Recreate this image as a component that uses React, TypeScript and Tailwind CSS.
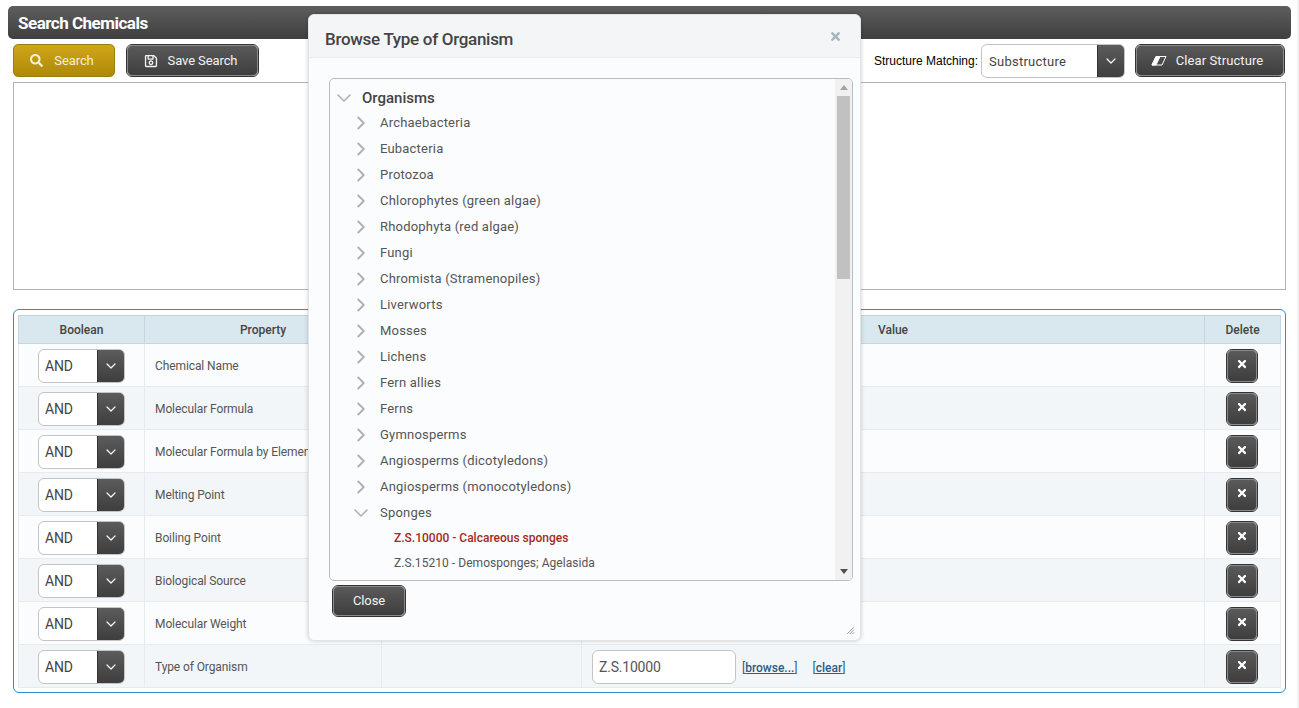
import { ChevronDown, ChevronRight } from "lucide-react";
import type { ReactNode } from "react";
import { FaRegSave, FaSearch, FaTimes } from "react-icons/fa";

const ROWS = [
  "Chemical Name",
  "Molecular Formula",
  "Molecular Formula by Element",
  "Melting Point",
  "Boiling Point",
  "Biological Source",
  "Molecular Weight",
  "Type of Organism",
];

const TREE = [
  "Archaebacteria",
  "Eubacteria",
  "Protozoa",
  "Chlorophytes (green algae)",
  "Rhodophyta (red algae)",
  "Fungi",
  "Chromista (Stramenopiles)",
  "Liverworts",
  "Mosses",
  "Lichens",
  "Fern allies",
  "Ferns",
  "Gymnosperms",
  "Angiosperms (dicotyledons)",
  "Angiosperms (monocotyledons)",
];

const darkBtn =
  "flex items-center justify-center rounded-[5px] border border-[#8a8a8a] bg-gradient-to-b from-[#5a5a5a] to-[#3e3e3e] text-[13px] tracking-[-0.1px] text-[#f2f2f2] outline outline-1 outline-[#333]";

function Button({ icon, label, className }: { icon: ReactNode; label: string; className: string }) {
  return (
    <button className={[darkBtn, "mt-px h-[31px]", className].join(" ")}>
      {icon}
      <span>{label}</span>
    </button>
  );
}

function Select({ value, className, textClass }: { value: string; className: string; textClass: string }) {
  return (
    <div className={["flex h-[34px] overflow-hidden rounded-[6px] border border-[#c4c4c4] bg-white", className].join(" ")}>
      <span className={["flex flex-1 items-center text-[#444]", textClass].join(" ")}>{value}</span>
      <span className="-my-px -mr-px flex w-[28px] items-center justify-center rounded-r-[6px] border border-[#333] bg-gradient-to-b from-[#5c5c5c] to-[#3e3e3e] text-white">
        <ChevronDown size={16} strokeWidth={1.8} />
      </span>
    </div>
  );
}

function TreeRow({ label }: { label: string }) {
  return (
    <div className="flex h-[26px] items-center text-[13px] tracking-[0.2px] text-[#555]">
      <ChevronRight size={22} strokeWidth={2} className="ml-[20px] mr-[8px] text-[#aab2b7]" />
      {label}
    </div>
  );
}

function Modal() {
  return (
    <div className="absolute left-[308px] top-[14px] flex h-[627px] w-[553px] flex-col rounded-[6px] border border-[#e2e4e6] bg-[#fafcfe] shadow-[0_0_4px_rgba(0,0,0,0.2)]">
      <div className="flex h-[43px] items-center justify-between rounded-t-[6px] border-b border-[#e8edf1] bg-[#f3f5f7] pl-[16px] pr-[18px]">
        <h3 className="pt-[7px] text-[17px] font-medium tracking-[-0.3px] text-[#444]">Browse Type of Organism</h3>
        <FaTimes size={13} className="text-[#a9b4bb]" />
      </div>
      <div className="mx-[20px] mt-[20px] flex h-[503px] w-[524px] overflow-hidden rounded-[5px] border border-[#bcbcbc]">
        <div className="h-full flex-1 overflow-hidden">
          <div className="flex h-[31px] items-center pt-[7px] text-[15px] font-medium text-[#444]">
            <ChevronDown size={24} strokeWidth={1.6} className="ml-[2px] mr-[6px] text-[#aab2b7]" />
            Organisms
          </div>
          {TREE.map((t) => (
            <TreeRow key={t} label={t} />
          ))}
          <div className="flex h-[26px] items-center text-[13px] tracking-[0.2px] text-[#555]">
            <ChevronDown size={24} strokeWidth={1.6} className="ml-[19px] mr-[7px] text-[#aab2b7]" />
            Sponges
          </div>
          <div className="flex h-[23px] items-center pl-[64px] text-[12px] font-medium text-[#a52a1c]">
            Z.S.10000 - Calcareous sponges
          </div>
          <div className="flex h-[28px] items-center pl-[64px] text-[12px] tracking-[0.05px] text-[#555]">
            Z.S.15210 - Demosponges; Agelasida
          </div>
        </div>
        <div className="flex h-full w-[17px] flex-col items-center bg-[#f1f1f1]">
          <div className="mt-[6px] h-0 w-0 border-x-[4px] border-b-[5px] border-x-transparent border-b-[#a3a3a3]" />
          <div className="mt-[6px] h-[183px] w-[13px] bg-[#c1c1c1]" />
          <div className="mb-[6px] mt-auto h-0 w-0 border-x-[4px] border-t-[5px] border-x-transparent border-t-[#505050]" />
        </div>
      </div>
      <button className={[darkBtn, "ml-[24px] mt-[5px] h-[30px] w-[72px]"].join(" ")}>Close</button>
      <svg viewBox="0 0 10 10" className="absolute bottom-[5px] right-[5px] h-[9px] w-[9px] stroke-[#999]">
        <path d="M1 9 9 1M4 9 9 4M7 9 9 7" />
      </svg>
    </div>
  );
}

export default function App() {
  return (
    <div className="relative flex h-[708px] overflow-hidden bg-white font-['Roboto',sans-serif]">
      <div className="flex-1 pl-[8px] pr-[6px] pt-[6px]">
        <div className="flex h-[33px] items-center rounded-[5px] bg-gradient-to-b from-[#5e5e5e] to-[#3f3f3f] pl-[10px] pt-[2px] text-[17px] font-bold tracking-[-0.5px] text-white">
          Search Chemicals
        </div>

        <div className="mt-[5px] flex h-[34px] items-start pl-[5px] pr-[7px]">
          <button className="flex h-[33px] w-[102px] items-center justify-center gap-[11px] rounded-[5px] border border-[#9c7c0c] bg-gradient-to-b from-[#d0a519] to-[#ad8a08] pr-[4px] text-[13px] tracking-[-0.1px] text-[#f4f0dc]">
            <FaSearch size={13} />
            <span>Search</span>
          </button>
          <Button icon={<FaRegSave size={14} />} label="Save Search" className="ml-[12px] w-[131px] gap-[10px] pr-[4px]" />
          <span className="ml-auto mr-[3px] mt-[8px] font-['Liberation_Sans',sans-serif] text-[12px] text-black">
            Structure Matching:
          </span>
          <Select value="Substructure" className="w-[144px]" textClass="pl-[7px] pt-[2px] text-[13px] tracking-[0.25px]" />
          <Button
            icon={
              <svg viewBox="0 0 16 10" className="h-[10px] w-[16px] fill-white stroke-white">
                <path d="M5 .5H15L11 9H1Z" fill="none" />
                <path d="M5 .5H9L5 9H1Z" />
              </svg>
            }
            label="Clear Structure"
            className="ml-[11px] w-[148px] gap-[9px] pr-[6px] tracking-[0.1px]"
          />
        </div>

        <div className="ml-[5px] mr-[5px] mt-[4px] h-[208px] border border-[#b4b4b4] bg-white" />

        <div className="ml-[5px] mr-[5px] mt-[19px] h-[384px] rounded-[6px] border border-[#2e8ccf] px-[4px] pt-[5px]">
          <table className="w-full table-fixed border-collapse text-[12px] text-[#555]">
            <colgroup>
              <col className="w-[126px]" />
              <col className="w-[237px]" />
              <col className="w-[200px]" />
              <col />
              <col className="w-[76px]" />
            </colgroup>
            <thead>
              <tr className="h-[28px] bg-[#d9e7ef] text-[12px] text-[#444]">
                <th className="border border-[#c3d7e3] font-medium">Boolean</th>
                <th className="border border-[#c3d7e3] font-medium">Property</th>
                <th className="border border-[#c3d7e3] font-medium" />
                <th className="border border-[#c3d7e3] font-medium">Value</th>
                <th className="border border-[#c3d7e3] font-medium">Delete</th>
              </tr>
            </thead>
            <tbody>
              {ROWS.map((name, i) => (
                <tr key={name} className={["h-[43px]", i % 2 ? "bg-[#f3f6f8]" : "bg-[#fafcfe]"].join(" ")}>
                  <td className="border border-[#e5ecf0] pl-[19px] pt-[2px]">
                    <Select value="AND" className="w-[87px]" textClass="pl-[6px] text-[14px] tracking-[-0.2px]" />
                  </td>
                  <td className="border border-[#e5ecf0] pl-[10px] pt-[2px] tracking-[-0.1px]">{name}</td>
                  <td className="border border-[#e5ecf0]" />
                  <td className="border border-[#e5ecf0] pl-[10px] pt-[2px]">
                    {name === "Type of Organism" && (
                      <div className="flex items-center">
                        <span className="flex h-[34px] w-[144px] items-center rounded-[6px] border border-[#c4c4c4] bg-white pl-[6px] text-[14px] tracking-[-0.2px] text-[#555]">
                          Z.S.10000
                        </span>
                        <span className="ml-[6px] pt-px text-[#2b5d85]">
                          [<span className="font-medium underline">browse...</span>]
                        </span>
                        <span className="ml-[15px] pt-px text-[#2b5d85]">
                          [<span className="font-medium underline">clear</span>]
                        </span>
                      </div>
                    )}
                  </td>
                  <td className="border border-[#e5ecf0] pr-[2px] pt-[2px]">
                    <button className="mx-auto flex h-[32px] w-[30px] items-center justify-center rounded-[5px] border border-[#8a8a8a] bg-gradient-to-b from-[#5a5a5a] to-[#3e3e3e] text-white outline outline-1 outline-[#333]">
                      <FaTimes size={12} className="mb-[5px]" />
                    </button>
                  </td>
                </tr>
              ))}
            </tbody>
          </table>
        </div>
      </div>
      <div className="w-[2px] bg-[#f1f1f1]" />
      <Modal />
    </div>
  );
}
